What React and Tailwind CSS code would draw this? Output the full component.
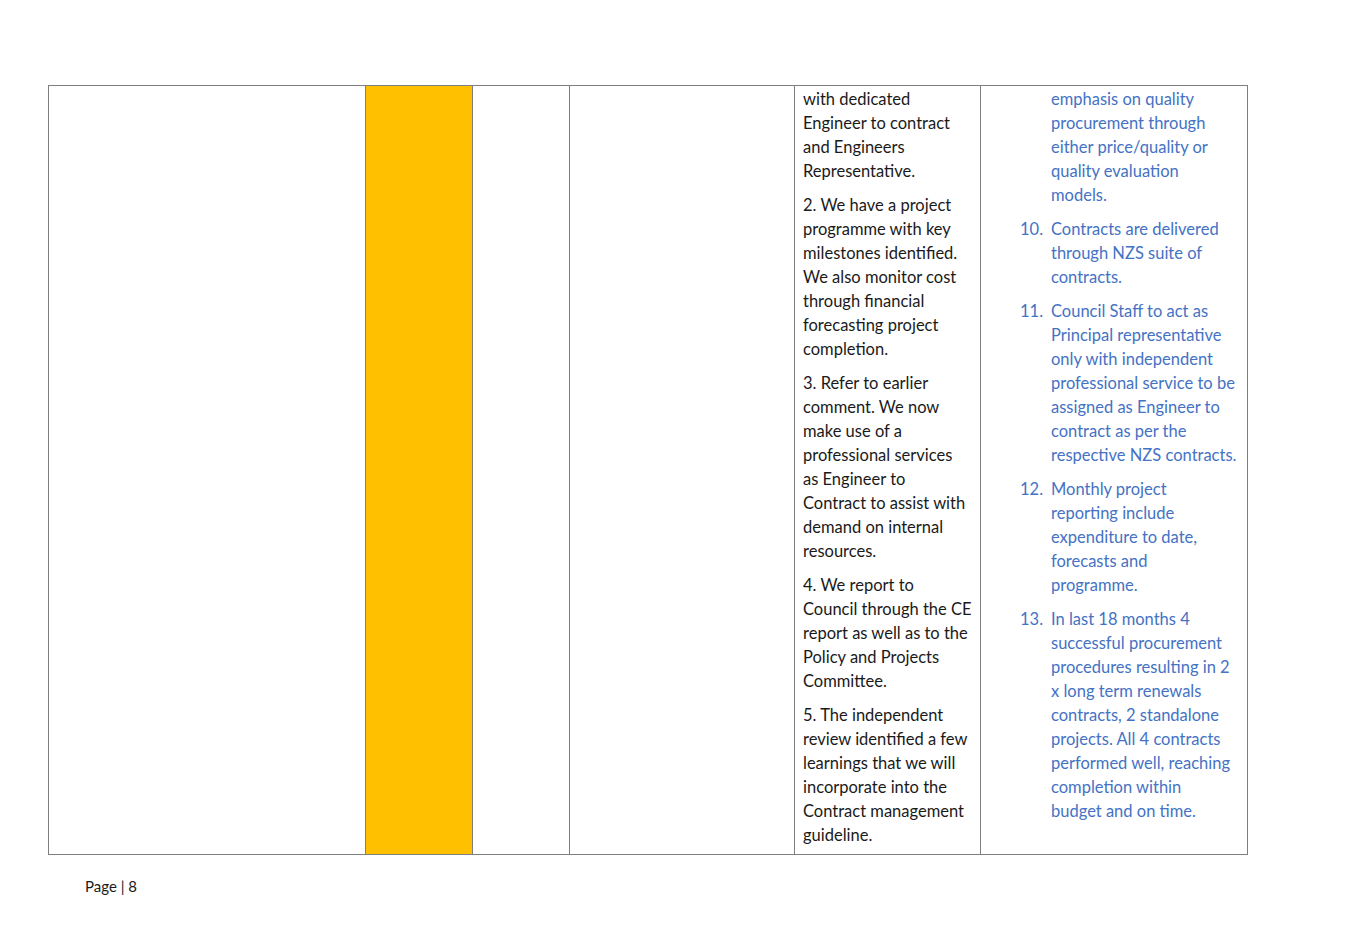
import React from "react";

const col5 = [
  ["with dedicated", "Engineer to contract", "and Engineers", "Representative."],
  ["2. We have a project", "programme with key", "milestones identified.", "We also monitor cost", "through financial", "forecasting project", "completion."],
  ["3. Refer to earlier", "comment. We now", "make use of a", "professional services", "as Engineer to", "Contract to assist with", "demand on internal", "resources."],
  ["4. We report to", "Council through the CE", "report as well as to the", "Policy and Projects", "Committee."],
  ["5. The independent", "review identified a few", "learnings that we will", "incorporate into the", "Contract management", "guideline."],
];

const col6 = [
  [null, ["emphasis on quality", "procurement through", "either price/quality or", "quality evaluation", "models."]],
  ["10.", ["Contracts are delivered", "through NZS suite of", "contracts."]],
  ["11.", ["Council Staff to act as", "Principal representative", "only with independent", "professional service to be", "assigned as Engineer to", "contract as per the", "respective NZS contracts."]],
  ["12.", ["Monthly project", "reporting include", "expenditure to date,", "forecasts and", "programme."]],
  ["13.", ["In last 18 months 4", "successful procurement", "procedures resulting in 2", "x long term renewals", "contracts, 2 standalone", "projects. All 4 contracts", "performed well, reaching", "completion within", "budget and on time."]],
];

export default function App() {
  return (
    <div
      className="w-[1360px] h-[939px] bg-white pt-[85px]"
      style={{ fontFamily: "Lato, 'Open Sans', sans-serif" }}
    >
      <div className="ml-[48px] w-[1200px] flex border-l border-t border-b border-[#7f7f7f]">
        <div className="w-[317px] border-r border-[#7f7f7f]" />
        <div className="w-[107px] border-r border-[#7f7f7f] bg-[#ffc000]" />
        <div className="w-[97px] border-r border-[#7f7f7f]" />
        <div className="w-[225px] border-r border-[#7f7f7f]" />
        <div className="w-[186px] border-r border-[#7f7f7f] pl-[8px] pt-[1px] pb-[7px] text-[16.5px] leading-[24px] text-[#1a1a1a] flex flex-col gap-[10px]">
          {col5.map((p, i) => (
            <div key={i}>
              {p.map((l, j) => (
                <div key={j} className="whitespace-nowrap">{l}</div>
              ))}
            </div>
          ))}
        </div>
        <div className="w-[267px] border-r border-[#7f7f7f] pl-[39px] pt-[1px] text-[16.5px] leading-[24px] text-[#4472c4] flex flex-col gap-[10px]">
          {col6.map(([n, lines], i) => (
            <div key={i} className="flex">
              <div className="w-[31px] shrink-0">{n}</div>
              <div>
                {lines.map((l, j) => (
                  <div key={j} className="whitespace-nowrap">{l}</div>
                ))}
              </div>
            </div>
          ))}
        </div>
      </div>
      <div className="ml-[85px] mt-[21px] text-[15px] leading-[20px] text-[#1a1a1a]">
        Page | 8
      </div>
    </div>
  );
}
